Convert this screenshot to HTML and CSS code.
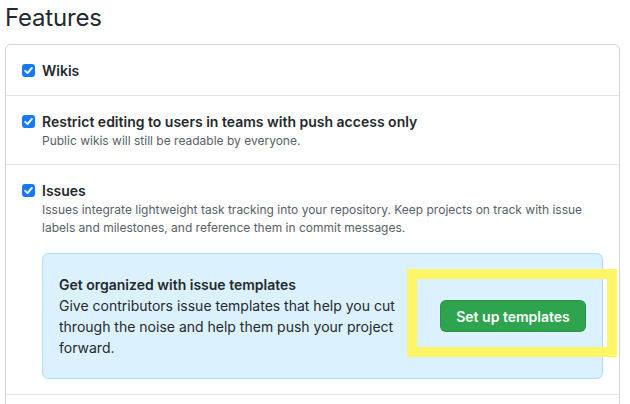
FILE: index.html
```html
<!DOCTYPE html>
<html>
<head>
<meta charset="utf-8">
<link rel="stylesheet" href="styles.css">
</head>
<body>
<div class="page">
  <h2 class="heading">Features</h2>
  <div class="box">
    <div class="row">
      <label class="opt"><input type="checkbox" class="cb" checked><span class="title">Wikis</span></label>
    </div>
    <div class="row">
      <label class="opt"><input type="checkbox" class="cb" checked><span class="title">Restrict editing to users in teams with push access only</span></label>
      <p class="note">Public wikis will still be readable by everyone.</p>
    </div>
    <div class="row">
      <label class="opt"><input type="checkbox" class="cb" checked><span class="title">Issues</span></label>
      <p class="note">Issues integrate lightweight task tracking into your repository. Keep projects on track with issue labels and milestones, and reference them in commit messages.</p>
      <div class="flash">
        <div class="flash-text">
          <strong class="flash-title">Get organized with issue templates</strong>
          <span>Give contributors issue templates that help you cut through the noise and help them push your project forward.</span>
        </div>
        <div class="flash-action">
          <button class="btn">Set up templates</button>
          <span class="highlight"></span>
        </div>
      </div>
    </div>
    <div class="row row-empty"></div>
  </div>
</div>
</body>
</html>
```
FILE: styles.css
```css
html, body {
  margin: 0;
  padding: 0;
  background: #ffffff;
}
body {
  font-family: Inter, "Liberation Sans", sans-serif;
  color: #24292e;
  overflow: hidden;
}
.page {
  width: 615px;
  padding: 3px 0 0 5px;
}
.heading {
  margin: 0 0 11px 0;
  font-size: 24px;
  font-weight: 400;
  line-height: 30px;
  letter-spacing: -0.2px;
}
.box {
  border: 1px solid #d1d5da;
  border-radius: 6px;
}
.row {
  padding: 15px 16px 14px 16px;
  border-top: 1px solid #e1e4e8;
}
.row:first-child {
  border-top: none;
}
.row-empty {
  height: 40px;
}
.opt {
  display: flex;
  align-items: center;
  height: 21px;
}
.cb {
  appearance: none;
  -webkit-appearance: none;
  width: 13px;
  height: 13px;
  margin: 0 7px 0 0;
  border-radius: 3px;
  background-color: #1679f7;
  background-image: url("data:image/svg+xml,%3Csvg xmlns='http://www.w3.org/2000/svg' viewBox='0 0 13 13'%3E%3Cpath d='M3.2 6.8 L5.5 9.1 L9.9 3.9' fill='none' stroke='white' stroke-width='1.9' stroke-linecap='round' stroke-linejoin='round'/%3E%3C/svg%3E");
  background-size: 13px 13px;
}
.title {
  font-size: 14px;
  font-weight: 600;
  line-height: 21px;
}
.note {
  margin: 0;
  padding-left: 20px;
  font-size: 12px;
  line-height: 18px;
  color: #586069;
}
.flash {
  position: relative;
  display: flex;
  align-items: center;
  margin: 16px 0 1px 20px;
  width: 561px;
  box-sizing: border-box;
  padding: 20px 16px;
  background: #dcf1fe;
  border: 1px solid #b3dafb;
  border-radius: 6px;
  font-size: 14px;
  line-height: 21px;
}
.flash-text {
  flex: 1;
  display: flex;
  flex-direction: column;
  margin-right: 40px;
}
.flash-title {
  font-weight: 600;
}
.flash-action {
  position: relative;
}
.btn {
  display: block;
  width: 146px;
  height: 32px;
  border: 1px solid rgba(27, 31, 35, 0.15);
  border-radius: 6px;
  background: #2ea44f;
  color: #ffffff;
  font-family: inherit;
  font-size: 14px;
  font-weight: 600;
  padding: 0;
}
.highlight {
  position: absolute;
  left: -33px;
  top: -31px;
  width: 210px;
  height: 88px;
  box-sizing: border-box;
  border: 10px solid #fff566;
}
```
